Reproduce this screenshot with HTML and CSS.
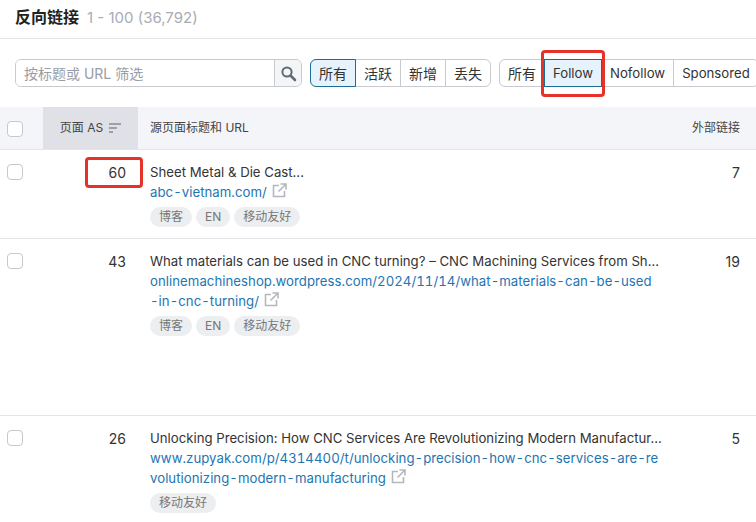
FILE: index.html
```html
<!DOCTYPE html>
<html lang="en">
<head>
  <meta charset="UTF-8" />
  <title>反向链接</title>
  <link rel="stylesheet" href="styles.css">
</head>
<body>
  <div class="page-header">
    <h1>反向链接</h1>
    <span class="count">1 - 100 (36,792)</span>
  </div>

  <div class="filters">
    <div class="search">
      <input type="text" placeholder="按标题或 URL 筛选" />
      <button class="search-btn" aria-label="search">
        <svg width="17" height="17" viewBox="0 0 17 17"><circle cx="7" cy="7" r="4.6" fill="none" stroke="#626a76" stroke-width="2"/><path d="M10.5 10.5L15 15" stroke="#626a76" stroke-width="2.6" stroke-linecap="round"/></svg>
      </button>
    </div>
    <div class="btn-group">
      <button class="active">所有</button>
      <button>活跃</button>
      <button>新增</button>
      <button>丢失</button>
    </div>
    <div class="btn-group type-group">
      <button class="cjk">所有</button>
      <button class="active marked">Follow</button>
      <button>Nofollow</button>
      <button>Sponsored</button>
    </div>
  </div>

  <div class="table">
    <div class="row head">
      <div class="cell-check"><span class="checkbox"></span></div>
      <div class="sorted">页面 AS
        <svg width="12" height="10" viewBox="0 0 12 10"><path d="M0 1h12M0 5h8M0 9h4" stroke="#858b95" stroke-width="1.5"/></svg>
      </div>
      <div class="cell-title">源页面标题和 URL</div>
      <div class="cell-ext">外部链接</div>
    </div>

    <div class="row row-1">
      <div class="cell-check"><span class="checkbox"></span></div>
      <div class="cell-as marked">60</div>
      <div class="cell-title">
        <div class="title">Sheet Metal &amp; Die Cast...</div>
        <a class="url">abc-vietnam.com/</a>
        <svg class="ext-icon" width="15" height="15" viewBox="0 0 15 15"><path d="M7 2.5H1.5v11h11V8M8.5 1H14v5.5M14 1L6.5 8.5" fill="none" stroke="#b4b8be" stroke-width="1.6"/></svg>
        <div class="tags"><span>博客</span><span>EN</span><span>移动友好</span></div>
      </div>
      <div class="cell-ext">7</div>
    </div>

    <div class="row row-2">
      <div class="cell-check"><span class="checkbox"></span></div>
      <div class="cell-as">43</div>
      <div class="cell-title">
        <div class="title">What materials can be used in CNC turning? – CNC Machining Services from Sh...</div>
        <a class="url">onlinemachineshop.wordpress.com/2024/11/14/what-materials-can-be-used<br>-in-cnc-turning/</a>
        <svg class="ext-icon" width="15" height="15" viewBox="0 0 15 15"><path d="M7 2.5H1.5v11h11V8M8.5 1H14v5.5M14 1L6.5 8.5" fill="none" stroke="#b4b8be" stroke-width="1.6"/></svg>
        <div class="tags"><span>博客</span><span>EN</span><span>移动友好</span></div>
      </div>
      <div class="cell-ext">19</div>
    </div>

    <div class="row row-3">
      <div class="cell-check"><span class="checkbox"></span></div>
      <div class="cell-as">26</div>
      <div class="cell-title">
        <div class="title">Unlocking Precision: How CNC Services Are Revolutionizing Modern Manufactur...</div>
        <a class="url">www.zupyak.com/p/4314400/t/unlocking-precision-how-cnc-services-are-re<br>volutionizing-modern-manufacturing</a>
        <svg class="ext-icon" width="15" height="15" viewBox="0 0 15 15"><path d="M7 2.5H1.5v11h11V8M8.5 1H14v5.5M14 1L6.5 8.5" fill="none" stroke="#b4b8be" stroke-width="1.6"/></svg>
        <div class="tags"><span>移动友好</span></div>
      </div>
      <div class="cell-ext">5</div>
    </div>
  </div>
</body>
</html>
```

FILE: styles.css
```css
/* Global Styling */
html, body {
  height: 100%;
}

body {
  margin: 0;
  overflow: hidden;
  background: #fff;
  color: #333;
  font-family: Inter, "Noto Sans CJK SC", sans-serif;
  font-size: 13.2px;
}

/* Page Header */
.page-header {
  display: flex;
  align-items: baseline;
  gap: 8px;
  height: 38px;
  padding-left: 15px;
  border-bottom: 1px solid #e4e5e8;
  line-height: 34px;
}

h1 {
  margin: 0;
  font-size: 16px;
  font-weight: 600;
  color: #222;
}

.count {
  font-size: 15px;
  color: #a9acb2;
}

/* Filters */
.filters {
  display: flex;
  height: 28px;
  padding: 20px 0 20px 15px;
  white-space: nowrap;
}

.search {
  display: flex;
  flex-shrink: 0;
  width: 287px;
  height: 28px;
  border: 1px solid #c8cacf;
  border-radius: 6px;
  box-sizing: border-box;
  overflow: hidden;
}

.search input {
  flex: 1;
  min-width: 0;
  padding: 0 8px;
  border: 0;
  font: inherit;
  font-size: 14px;
}

.search input::placeholder {
  color: #9a9da4;
}

.search-btn {
  display: flex;
  align-items: center;
  justify-content: center;
  width: 27px;
  padding: 0;
  border: 0;
  border-left: 1px solid #c8cacf;
  background: #f4f5f6;
}

.btn-group {
  display: flex;
  flex-shrink: 0;
  margin-left: 8px;
  height: 28px;
}

.btn-group button {
  flex-shrink: 0;
  height: 28px;
  padding: 0 8px;
  margin-left: -1px;
  border: 1px solid #c8cacf;
  background: #fff;
  color: #333;
  font: inherit;
  font-size: 14px;
}

.type-group button {
  font-size: 13.2px;
}

.type-group button.cjk {
  font-size: 14px;
}

.btn-group button:first-child {
  margin-left: 0;
  border-radius: 6px 0 0 6px;
}

.btn-group button:last-child {
  border-radius: 0 6px 6px 0;
}

.btn-group button.active {
  position: relative;
  z-index: 1;
  border-color: #1d6c93;
  background: #e6f2fc;
}

/* Red callouts */
.marked {
  position: relative;
}

.marked::after {
  content: "";
  position: absolute;
  border: 3px solid #e5332a;
  border-radius: 4px;
}

.btn-group .marked::after {
  inset: -10px -4px -11px -4px;
}

.cell-as.marked::after {
  top: 7px;
  right: -5px;
  width: 52px;
  height: 25px;
}

/* Table */
.row {
  display: grid;
  grid-template-columns: 43px 95px minmax(0, 1fr) 110px;
  border-bottom: 1px solid #e4e5e8;
}

.head {
  height: 42px;
  background: #f4f5f8;
  font-size: 12px;
  line-height: 42px;
  color: #444;
}

.head .cell-check {
  padding-top: 14px;
}

.sorted {
  display: flex;
  align-items: center;
  justify-content: center;
  gap: 6px;
  background: #dfe1e6;
}

.row-1 {
  height: 88px;
}

.row-2 {
  height: 176px;
}

/* cut off by the window in the original, so no bottom line */
.row-3 {
  height: 106px;
  border-bottom: 0;
}

.cell-check {
  padding: 14px 0 0 7px;
}

.checkbox {
  display: block;
  width: 14px;
  height: 14px;
  border: 1px solid #c6c8cd;
  border-radius: 4px;
  background: #fff;
}

.cell-as {
  padding: 13px 12px 0 0;
  text-align: right;
  font-size: 14px;
  line-height: 20px;
}

.cell-title {
  padding: 12px 0 0 12px;
  line-height: 20px;
}

.head .cell-title {
  padding-top: 0;
  line-height: 42px;
}

.title {
  white-space: nowrap;
}

.url {
  color: #1d75b3;
  letter-spacing: 0.04px;
  font-variant-numeric: tabular-nums;
  white-space: nowrap;
}

.ext-icon {
  margin-left: 1px;
  vertical-align: -1px;
}

.cell-ext {
  padding: 13px 16px 0 0;
  text-align: right;
  font-size: 14px;
  line-height: 20px;
}

.head .cell-ext {
  padding-top: 0;
  font-size: 12px;
  line-height: 42px;
}

.tags {
  display: flex;
  gap: 4px;
  margin-top: 5px;
}

.tags span {
  height: 20px;
  padding: 0 9px;
  border-radius: 10px;
  background: #eceef0;
  color: #777;
  font-size: 12px;
  line-height: 20px;
}
```
